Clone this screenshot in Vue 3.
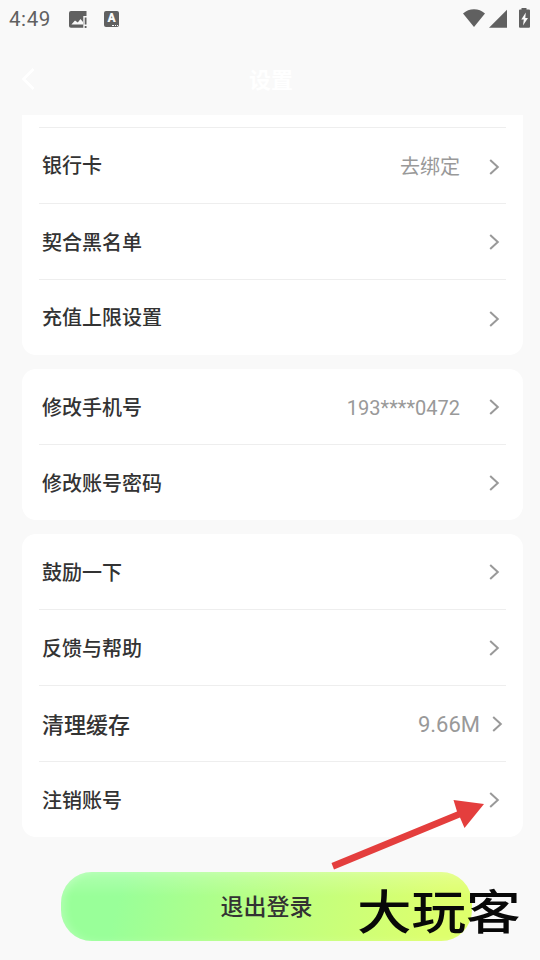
<script setup>
const groups = [
  {
    name: 'payment',
    rows: [
      { label: '银行卡', value: '去绑定', tone: 'low' },
      { label: '契合黑名单' },
      { label: '充值上限设置', tone: 'low' }
    ]
  },
  {
    name: 'security',
    rows: [{ label: '修改手机号', value: '193****0472' }, { label: '修改账号密码' }]
  },
  {
    name: 'general',
    rows: [
      { label: '鼓励一下' },
      { label: '反馈与帮助' },
      { label: '清理缓存', value: '9.66M', tone: 'large' },
      { label: '注销账号' }
    ]
  }
]
</script>

<template>
  <div class="screen">
    <div class="status">
      <span class="time">4:49</span>
      <svg class="notice-image" width="18" height="18" viewBox="0 0 18 18">
        <path fill="#606060" fill-rule="evenodd" d="M2 0H17.5V5H14.3V16.8H2Q0 16.8 0 15V2Q0 0 2 0ZM2.4 13.5H14V11L11.5 8L8.8 11.4L6 9.5Z" />
        <path fill="#606060" d="M15.7 6.5h1.8v7h-1.8zM15.7 15h1.8v1.9h-1.8z" />
      </svg>
      <span class="notice-letter">A<i></i></span>
      <svg class="system" width="68" height="20" viewBox="0 0 68 20">
        <path fill="#606060" d="M0 4.5C6-1.2 16-1.2 22 4.5L11 18Z" />
        <path fill="#606060" d="M26 18.7L44 .7V18.7Z" />
        <path fill="#606060" d="M58.5 -1h5v1.5H66q1 0 1 1V17.7q0 1-1 1H57q-1 0-1-1V1.5q0-1 1-1h1.5Z" />
        <path fill="#fafafa" d="M62.8 3.6L58.3 10.6h2.5l-.8 6L65 9h-2.7Z" />
      </svg>
    </div>

    <header class="header">
      <svg width="14" height="24" viewBox="0 0 14 24" fill="none" stroke="#fff" stroke-width="2.7">
        <path d="M12.5 2L2.5 12L12.5 22" />
      </svg>
      <h1>设置</h1>
    </header>

    <main class="list">
      <section v-for="group in groups" :key="group.name" class="card" :class="group.name">
        <div v-for="row in group.rows" :key="row.label" class="row" :class="row.tone">
          <span class="label">{{ row.label }}</span>
          <span v-if="row.value" class="value">{{ row.value }}</span>
          <svg class="chevron" width="11" height="16" viewBox="0 0 11 16" fill="none" stroke="#999" stroke-width="2">
            <path d="M1.2 1L8.8 8L1.2 15" />
          </svg>
        </div>
      </section>
    </main>

    <button class="logout">退出登录</button>

    <svg class="pointer" width="156" height="74" viewBox="0 0 156 74">
      <path fill="#e43e3d" d="M.5 67L126 15.5L122.5 4L153 8L133.500 32L129 21.500L3 73.5Z" />
    </svg>
    <div class="watermark">大玩客</div>
  </div>
</template>

<style>
body {
  margin: 0;
  background: #f9f9f9;
}
</style>

<style scoped>
.screen {
  position: relative;
  box-sizing: border-box;
  width: 540px;
  height: 960px;
  overflow: hidden;
  background: #f9f9f9;
  color: #333;
  font-family: Roboto, "Noto Sans CJK SC", sans-serif;
}
.status {
  display: flex;
  align-items: center;
  box-sizing: border-box;
  height: 38px;
  padding: 0 9px 0 9px;
  color: #606060;
}
.time {
  width: 60px;
  font-size: 20.5px;
  letter-spacing: .6px;
  line-height: 38px;
}
.notice-image {
  margin-top: 1px;
}
.notice-letter {
  position: relative;
  width: 15px;
  height: 16px;
  margin-left: 17px;
  border-radius: 2px;
  background: #606060;
  color: #fafafa;
  font-size: 12px;
  font-weight: 900;
  line-height: 14px;
  text-align: center;
}
.notice-letter i {
  position: absolute;
  right: 1px;
  bottom: 1px;
  width: 6px;
  border-bottom: 1px dotted #fafafa;
}
.system {
  overflow: visible;
  margin-left: auto;
}
.header {
  display: grid;
  grid-template-columns: 40px 1fr 40px;
  align-items: center;
  height: 77px;
  padding: 0 20px;
}
.header svg {
  margin: 5px 0 0 1px;
}
.header h1 {
  margin: 9px 0 0 2px;
  color: #fff;
  font-size: 22px;
  font-weight: 700;
  line-height: 30px;
  text-align: center;
}
.list {
  display: flex;
  flex-direction: column;
  gap: 14px;
  height: 722px;
  padding: 0 17px 0 22px;
}
.card {
  box-sizing: border-box;
  padding: 0 17px;
  border-radius: 14px;
  background: #fff;
}
.payment {
  padding-top: 12px;
  border-radius: 0 0 14px 14px;
}
.row {
  display: flex;
  align-items: center;
  box-sizing: border-box;
  height: 76px;
  padding: 0 6px 0 3px;
  border-top: 1px solid #eee;
}
.row:first-child {
  height: 75px;
  border-top: 0;
}
.payment .row:first-child {
  height: 76px;
  border-top: 1px solid #eee;
}
.label {
  flex: 1;
  padding-top: 2px;
  font-size: 20px;
  font-weight: 500;
  line-height: 30px;
}
.value {
  margin-right: 29px;
  padding-top: 2px;
  color: #999;
  font-size: 20px;
  line-height: 30px;
}
.low .label {
  padding-top: 1px;
}
.low .chevron {
  margin-top: 3px;
}
.large {
  padding-right: 3px;
}
.large .label {
  padding-top: 4px;
  font-size: 22px;
}
.large .value {
  margin-right: 12px;
  padding-top: 3px;
  font-size: 22px;
}
.logout {
  display: block;
  width: 411px;
  height: 69px;
  margin: 35px 0 0 61px;
  padding: 2px 0 0;
  border: 0;
  border-radius: 31px;
  background:
    linear-gradient(180deg, rgba(255, 255, 255, .22), rgba(255, 255, 255, 0) 35%),
    linear-gradient(105deg, #99ff99 15%, #bfff80 55%, #deff6c 92%);
  box-shadow: inset 5px 0 8px -2px rgba(255, 255, 255, .25);
  color: #333;
  font-family: Roboto, "Noto Sans CJK SC", sans-serif;
  font-size: 23px;
  font-weight: 500;
  line-height: 67px;
}
.pointer {
  position: absolute;
  left: 331px;
  top: 796px;
}
.watermark {
  position: absolute;
  left: 357px;
  top: 877px;
  color: #080808;
  font-family: "Noto Sans CJK SC", sans-serif;
  font-size: 47px;
  font-weight: 500;
  line-height: 64px;
  white-space: nowrap;
  transform: scaleX(1.16);
  transform-origin: left center;
}
</style>
